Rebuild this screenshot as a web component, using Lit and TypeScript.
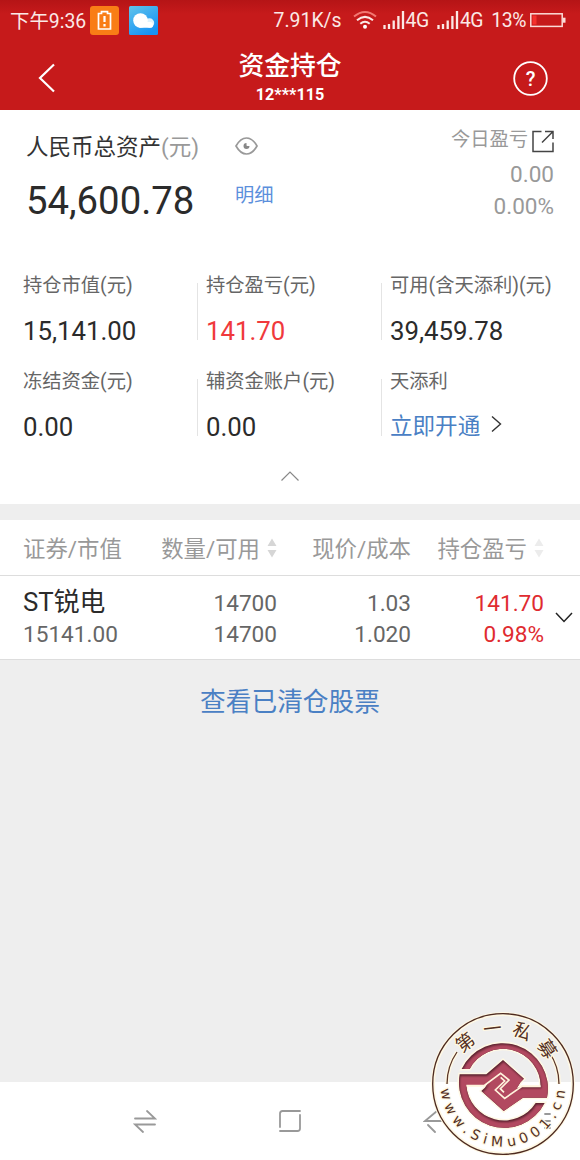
import { LitElement, css, html, svg, nothing } from 'lit';
import { customElement, property } from 'lit/decorators.js';
import { classMap } from 'lit/directives/class-map.js';

interface Fund {
  label: string;
  value: string;
  kind?: 'up' | 'link';
}

const FUNDS: Fund[] = [
  { label: '持仓市值(元)', value: '15,141.00' },
  { label: '持仓盈亏(元)', value: '141.70', kind: 'up' },
  { label: '可用(含天添利)(元)', value: '39,459.78' },
  { label: '冻结资金(元)', value: '0.00' },
  { label: '辅资金账户(元)', value: '0.00' },
  { label: '天添利', value: '立即开通', kind: 'link' },
];

const POSITIONS = [
  {
    name: 'ST锐电',
    marketValue: '15141.00',
    amount: '14700',
    available: '14700',
    price: '1.03',
    cost: '1.020',
    profit: '141.70',
    rate: '0.98%',
  },
];

@customElement('status-bar')
export class StatusBar extends LitElement {
  static styles = css`
    :host {
      display: flex;
      align-items: center;
      height: 40px;
      padding: 0 14px 0 10px;
      font-size: 19.4px;
      color: #fbe9e6;
      box-sizing: border-box;
      white-space: nowrap;
    }
    svg {
      display: block;
      flex: none;
    }
    .time {
      width: 80px;
      margin-top: -2px;
    }
    .weather {
      margin-left: 10px;
    }
    .speed {
      margin-left: auto;
    }
    .wifi {
      margin: 0 6px 0 11px;
    }
    .network {
      letter-spacing: -0.4px;
      margin: 0 8px 0 1px;
    }
    .percent {
      letter-spacing: -0.4px;
      margin-right: 4px;
    }
  `;

  signal() {
    return html`
      <svg width="22" height="20" viewBox="0 0 22 20">
        <path
          d="M1.5 14v4M6 13v5M10.7 9.500v8.500M15.400 5v13M20 0v18"
          transform="translate(0 1)"
          stroke="#fbe9e6"
          stroke-width="2.300"
        />
      </svg>
      <span class="network">4G</span>
    `;
  }

  render() {
    return html`
      <span class="time">下午9:36</span>
      <svg width="29" height="29" viewBox="0 0 29 29">
        <rect width="29" height="29" rx="3" fill="#f97d16" />
        <path
          d="M8.500 7.500h3V5.600h6v1.900h3v15.500h-12z"
          fill="none"
          stroke="#fff"
          stroke-width="1.700"
        />
        <path d="M14.500 10v6M14.500 18v2.500" stroke="#fff" stroke-width="2.200" />
      </svg>
      <svg class="weather" width="29" height="29" viewBox="0 0 29 29">
        <defs>
          <linearGradient id="sky" x1="0" y1="0" x2="0.600" y2="1">
            <stop offset="0" stop-color="#62c4ea" />
            <stop offset="1" stop-color="#1793f5" />
          </linearGradient>
        </defs>
        <rect width="29" height="29" rx="1.500" fill="url(#sky)" />
        <circle cx="20.500" cy="17" r="4.700" fill="#dff3fd" />
        <circle cx="11.500" cy="14.500" r="7.300" fill="#fff" />
        <rect x="9" y="16" width="15" height="5.800" rx="2.900" fill="#fff" />
      </svg>
      <span class="speed">7.91K/s</span>
      <svg class="wifi" width="24" height="20" viewBox="0 0 24 20">
        <g fill="none" stroke="#fbe9e6" stroke-width="2">
          <path d="M1 6.500Q12-2.500 23 6.500" stroke="#f27872" />
          <path d="M4 10.200Q12 3.500 20 10.200M7.300 13.800Q12 9.800 16.700 13.800" />
        </g>
        <circle cx="12" cy="16.800" r="2" fill="#fff" />
      </svg>
      ${this.signal()} ${this.signal()}
      <span class="percent">13%</span>
      <svg width="36" height="16" viewBox="0 0 36 16">
        <rect
          x="0.800"
          y="1.800"
          width="31.400"
          height="12.600"
          fill="none"
          stroke="#fbdcd8"
          stroke-width="1.500"
        />
        <rect x="2.500" y="3.500" width="4" height="9" fill="#f5302c" />
        <rect x="33" y="5.700" width="2.500" height="5" fill="#fbdcd8" />
      </svg>
    `;
  }
}

@customElement('sort-arrows')
export class SortArrows extends LitElement {
  static styles = css`
    :host,
    svg {
      display: block;
    }
  `;

  render() {
    return html`
      <svg width="10" height="20" viewBox="0 0 10 20" fill="currentColor">
        <path d="M5 0.500l4.500 7.500h-9zM5 19.500l4.500-7.500h-9z" />
      </svg>
    `;
  }
}

@customElement('fund-cell')
export class FundCell extends LitElement {
  static styles = css`
    :host {
      display: block;
    }
    .label {
      font-size: 19.300px;
      line-height: 30px;
      color: #666;
      white-space: nowrap;
    }
    .value {
      display: flex;
      align-items: center;
      height: 36px;
      margin-top: 12px;
      font-size: 25.800px;
      color: #2b2b2b;
    }
    .value.up {
      color: #f0393c;
    }
    .value.link {
      height: 30px;
      font-size: 22.550px;
      color: #4a80c4;
    }
    svg {
      margin-left: 11px;
    }
  `;

  @property({ attribute: false }) fund!: Fund;

  render() {
    const { label, value, kind } = this.fund;
    return html`
      <div class="label">${label}</div>
      <div class=${classMap({ value: true, [kind ?? 'plain']: true })}>
        ${value}
        ${kind === 'link'
          ? html`
              <svg width="11" height="18" viewBox="0 0 11 18">
                <path
                  d="M1 1.500l8.500 7.500L1 16.500"
                  fill="none"
                  stroke="#333"
                  stroke-width="1.400"
                />
              </svg>
            `
          : nothing}
      </div>
    `;
  }
}

@customElement('simu-seal')
export class SimuSeal extends LitElement {
  static styles = css`
    :host,
    svg {
      display: block;
    }
    .top {
      font: 18.500px 'Noto Sans CJK SC', sans-serif;
      letter-spacing: 8.500px;
    }
    .bottom {
      font: 14px 'DejaVu Sans', sans-serif;
      letter-spacing: 5px;
    }
  `;

  // drawn at three times its size, scaled down by the parent group
  static emblem = svg`
    <path d="M21 99A136 136 0 0 1 277 185H205L147 225L80 165L138 112L163 132L137 158L148 172L200 152H258A113 113 0 0 0 45 99Z" />
    <path d="M15 115H95L145 72L208 128L150 187L122 162L150 135L138 112L88 148H35A113 113 0 0 0 243 201H270A136 136 0 0 1 15 115Z" />
    <path d="M145 76L204 128L147 221L84 165Z" />
  `;

  render() {
    return html`
      <svg width="144" height="144" viewBox="-72 -72 144 144">
        <defs>
          <path id="upper" d="M-49.500 0A49.500 49.500 0 0 1 49.500 0" />
          <path id="lower" d="M-62.500 0A62.500 62.500 0 0 0 62.500 0" />
          <clipPath id="emblem">${SimuSeal.emblem}</clipPath>
          <filter id="soft"><feGaussianBlur stdDeviation="3" /></filter>
        </defs>
        <circle r="70" fill="none" stroke="#fff8e4" stroke-width="4" />
        <circle r="70.300" fill="none" stroke="#4d2a20" stroke-width="1.300" />
        <g fill="none">
          <path
            d="M-56 0A56 56 0 0 1-46-32M46-32A56 56 0 0 1 56 0"
            stroke="#fff8e4"
            stroke-width="4"
          />
          <path
            d="M-56 0A56 56 0 0 1-46-32M46-32A56 56 0 0 1 56 0"
            stroke="#5a3527"
            stroke-width="1.300"
          />
        </g>
        <g transform="scale(0.3333) translate(-145 -144)">
          <g fill="#fff8e4" stroke="#fff8e4" stroke-width="9">
            ${SimuSeal.emblem}
          </g>
          <g clip-path="url(#emblem)">
            <rect width="300" height="300" fill="#57202c" />
            <g
              fill="#b24a60"
              filter="url(#soft)"
              transform="translate(2 5)"
            >
              ${SimuSeal.emblem}
            </g>
          </g>
          <g fill="none" stroke="#fff3dc" stroke-width="5">
            <path d="M35 149H88L138 112L163 132L137 158L148 169" />
            <path d="M258 151H202L150 187L122 162L150 135L138 124" />
          </g>
        </g>
        <g
          fill="#54301f"
          stroke="#fff8e4"
          stroke-width="2.500"
          paint-order="stroke"
          stroke-linejoin="round"
        >
          <text class="top" text-anchor="middle">
            <textPath href="#upper" startOffset="55%">第一私募</textPath>
          </text>
          <text class="bottom" text-anchor="middle">
            <textPath href="#lower" startOffset="51%">www.SiMu001.cn</textPath>
          </text>
        </g>
      </svg>
    `;
  }
}

@customElement('app-root')
export class AppRoot extends LitElement {
  static styles = css`
    :host {
      display: flex;
      flex-direction: column;
      position: relative;
      height: 1160px;
      overflow: hidden;
      background: #eee;
      font-family: Roboto, 'Noto Sans CJK SC', sans-serif;
    }
    svg {
      display: block;
      flex: none;
    }
    header {
      height: 109.500px;
      flex: none;
      color: #fff;
      background: linear-gradient(#b51416, #c61a1b 14px);
    }
    .title-bar {
      display: grid;
      grid-template-columns: 80px 1fr 80px;
      align-items: center;
      height: 70px;
      text-align: center;
    }
    .back {
      margin-left: 38px;
      margin-top: 6px;
    }
    .help {
      margin: 6px 0 0 13px;
    }
    h1 {
      margin: 3px 0 0;
      font-size: 25.800px;
      font-weight: 500;
      line-height: 36px;
    }
    .account {
      font-size: 16.200px;
      font-weight: 700;
      line-height: 22px;
    }

    .assets {
      flex: none;
      height: 394.500px;
      background: #fff;
    }
    .total {
      display: flex;
      height: 156.500px;
      padding: 0 26px;
      box-sizing: border-box;
    }
    .total-main {
      width: 209px;
      padding-top: 20px;
      white-space: nowrap;
    }
    .total-label {
      font-size: 22.500px;
      line-height: 34px;
      color: #333;
    }
    .total-label span {
      color: #999;
    }
    .total-value {
      margin-top: 13px;
      font-size: 38.300px;
      line-height: 48px;
      color: #2b2b2b;
    }
    .total-side {
      padding-top: 27px;
    }
    .detail {
      margin-top: 26px;
      font-size: 19.300px;
      line-height: 30px;
      color: #5b8fdc;
    }
    .today {
      margin-left: auto;
      padding-top: 14px;
      font-size: 22.550px;
      line-height: 32px;
      color: #999;
      text-align: right;
    }
    .today-label {
      display: flex;
      align-items: center;
      gap: 4px;
      height: 35px;
      font-size: 19.300px;
    }
    .today-label span {
      margin-top: -2px;
    }
    .funds {
      display: grid;
      grid-template-columns: 197px 184px 1fr;
      row-gap: 16px;
    }
    .fund {
      height: 80px;
      display: flex;
    }
    .fund::before {
      content: '';
      width: 1px;
      height: 57px;
      margin: 17px 8px 0 0;
      background: #e4e4e4;
    }
    .fund:nth-child(3n + 1)::before {
      margin-right: 22px;
      background: none;
    }
    fund-cell {
      padding-top: 5px;
    }
    .collapse {
      margin: 29px auto 0;
    }

    .positions {
      flex: none;
      margin-top: 16px;
      background: #fff;
    }
    .row {
      display: grid;
      grid-template-columns: 135px 119px 134px 133px 1fr;
      padding-left: 23px;
      border-bottom: 1px solid #ddd;
      white-space: nowrap;
    }
    .head {
      height: 55px;
      align-items: center;
      font-size: 22.400px;
      color: #999;
    }
    .head > div {
      display: flex;
      align-items: center;
      justify-content: flex-end;
    }
    .head > .first {
      justify-content: flex-start;
    }
    .head span {
      margin-top: -2px;
    }
    .head sort-arrows {
      margin-left: 7px;
      color: #d6d6d6;
    }
    .head .faint {
      color: #ececec;
    }
    .item {
      height: 84px;
      box-sizing: border-box;
      padding-top: 12px;
      font-size: 22.600px;
      line-height: 31px;
      color: #666;
      text-align: right;
    }
    .item .first {
      text-align: left;
    }
    .name {
      font-size: 25.800px;
      line-height: 29px;
      padding-bottom: 2px;
      color: #2b2b2b;
    }
    .up {
      color: #e02b30;
    }
    .expand {
      margin: 24px 0 0 11px;
    }
    .cleared {
      margin: 23px 0 0;
      font-size: 25.700px;
      line-height: 38px;
      text-align: center;
      color: #4a80c4;
    }
    nav {
      display: grid;
      grid-template-columns: 24px 24px 24px 1fr;
      column-gap: 121px;
      height: 78px;
      margin-top: auto;
      padding: 27px 0 0 133px;
      box-sizing: border-box;
      background: #fff;
    }
    nav svg:last-child {
      margin-left: -30px;
    }
    simu-seal {
      position: absolute;
      right: 5px;
      bottom: 4px;
    }
  `;

  renderHeader() {
    return html`
      <header>
        <status-bar></status-bar>
        <div class="title-bar">
          <svg class="back" width="18" height="30" viewBox="0 0 18 30">
            <path
              d="M16 1.500L2 15L16 28.500"
              fill="none"
              stroke="#fff"
              stroke-width="2.200"
            />
          </svg>
          <div>
            <h1>资金持仓</h1>
            <div class="account">12***115</div>
          </div>
          <svg class="help" width="35" height="35" viewBox="0 0 35 35">
            <circle
              cx="17.500"
              cy="17.500"
              r="16.300"
              fill="none"
              stroke="#fff"
              stroke-width="1.800"
            />
            <text
              x="17.500"
              y="24.500"
              font-size="20"
              font-weight="500"
              text-anchor="middle"
              fill="#fff"
            >?</text>
          </svg>
        </div>
      </header>
    `;
  }

  renderAssets() {
    return html`
      <section class="assets">
        <div class="total">
          <div class="total-main">
            <div class="total-label">人民币总资产<span>(元)</span></div>
            <div class="total-value">54,600.78</div>
          </div>
          <div class="total-side">
            <svg width="23" height="18" viewBox="0 0 23 18">
              <path
                d="M1 9Q5.500 1 11.500 1T22 9Q17.500 17 11.500 17T1 9z"
                fill="none"
                stroke="#999"
                stroke-width="1.700"
              />
              <path
                d="M11.500 6a3 3 0 1 0 3 3h-2.200a0.800 0.800 0 0 1-0.800-0.800z"
                fill="#888"
              />
            </svg>
            <div class="detail">明细</div>
          </div>
          <div class="today">
            <div class="today-label">
              <span>今日盈亏</span>
              <svg width="22" height="23" viewBox="0 0 22 23">
                <path
                  d="M9.500 1.500H1v20h20V12.500M13 1.500h8v7.500M21 1.500L10 12.500"
                  fill="none"
                  stroke="#444"
                  stroke-width="1.500"
                />
              </svg>
            </div>
            <div>0.00</div>
            <div>0.00%</div>
          </div>
        </div>
        <div class="funds">
          ${FUNDS.map(
            f => html`<div class="fund"><fund-cell .fund=${f}></fund-cell></div>`
          )}
        </div>
        <svg class="collapse" width="18" height="10" viewBox="0 0 18 10">
          <path
            d="M0.500 9.500L9 1l8.500 8.500"
            fill="none"
            stroke="#888"
            stroke-width="1.200"
          />
        </svg>
      </section>
    `;
  }

  renderPositions() {
    return html`
      <section class="positions">
        <div class="row head">
          <div class="first"><span>证券/市值</span></div>
          <div><span>数量/可用</span><sort-arrows></sort-arrows></div>
          <div><span>现价/成本</span></div>
          <div>
            <span>持仓盈亏</span><sort-arrows class="faint"></sort-arrows>
          </div>
        </div>
        ${POSITIONS.map(
          p => html`
            <div class="row item">
              <div class="first">
                <div class="name">${p.name}</div>
                <div>${p.marketValue}</div>
              </div>
              <div>
                <div>${p.amount}</div>
                <div>${p.available}</div>
              </div>
              <div>
                <div>${p.price}</div>
                <div>${p.cost}</div>
              </div>
              <div class="up">
                <div>${p.profit}</div>
                <div>${p.rate}</div>
              </div>
              <svg class="expand" width="18" height="11" viewBox="0 0 18 11">
                <path
                  d="M1 1l8 8.500L17 1"
                  fill="none"
                  stroke="#222"
                  stroke-width="1.500"
                />
              </svg>
            </div>
          `
        )}
      </section>
      <p class="cleared">查看已清仓股票</p>
    `;
  }

  renderNav() {
    const icons = [
      'M2 9.500H22L14 2M22 15.500H2L10 23',
      'M22 2H4.500Q2 2 2 4.500V18M2 22H19.500Q22 22 22 19.500V6',
      'M14 2L2 12H20M5 16L12 23',
      'M7 5H12M7 12H12M7 19H12',
    ];
    return html`
      <nav>
        ${icons.map(
          d => html`
            <svg width="24" height="24" viewBox="0 0 24 24">
              <path
                d=${d}
                fill="none"
                stroke="#999"
                stroke-width="1.800"
                stroke-linecap="round"
              />
            </svg>
          `
        )}
      </nav>
    `;
  }

  render() {
    return html`
      ${this.renderHeader()} ${this.renderAssets()} ${this.renderPositions()}
      ${this.renderNav()}
      <simu-seal></simu-seal>
    `;
  }
}
